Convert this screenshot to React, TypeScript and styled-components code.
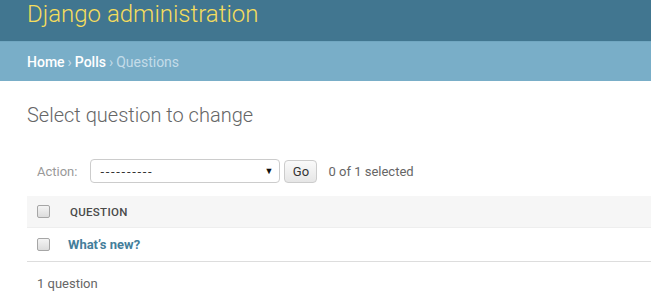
import React from 'react';
import styled, { createGlobalStyle } from 'styled-components';

const GlobalStyle = createGlobalStyle`
  html, body {
    margin: 0;
    padding: 0;
    background: #fff;
    overflow: hidden;
  }
  body {
    font-family: Roboto, "Liberation Sans", Arial, sans-serif;
    font-size: 14px;
    color: #333;
  }
`;

const Header = styled.div`
  background: #417690;
  height: 41px;
  padding: 0 27px;
  box-sizing: border-box;
`;

const Branding = styled.h1`
  margin: 0;
  font-size: 24px;
  line-height: 28px;
  font-weight: 300;
  color: #f5dd5d;
`;

const Breadcrumbs = styled.div`
  background: #79aec8;
  border-top: 1px solid #71a7c1;
  height: 40px;
  box-sizing: border-box;
  padding: 12px 27px 0;
  font-size: 14px;
  line-height: 17px;
  color: #c4dce8;
`;

const Crumb = styled.a`
  color: #fff;
  font-weight: 500;
  text-decoration: none;
`;

const Sep = styled.span`
  margin: 0 3px;
`;

const Content = styled.div`
  padding: 22px 0 0 27px;
`;

const Title = styled.h1`
  margin: 0 0 26px;
  font-size: 20px;
  line-height: 24px;
  font-weight: 300;
  color: #666;
`;

const Actions = styled.div`
  display: flex;
  align-items: center;
  padding: 0 10px;
  height: 36px;
  font-size: 13px;
  color: #999;
`;

const Label = styled.label`
  margin-right: 13px;
`;

const Select = styled.div`
  width: 190px;
  height: 24px;
  box-sizing: border-box;
  border: 1px solid #ccc;
  border-radius: 4px;
  display: flex;
  align-items: center;
  justify-content: space-between;
  padding: 0 6px 0 9px;
  color: #333;
  font-size: 13px;
`;

const Dashes = styled.span`
  letter-spacing: 1.7px;
`;

const Arrow = styled.span`
  font-size: 9px;
  color: #111;
`;

const GoButton = styled.button`
  margin-left: 4px;
  width: 33px;
  height: 23px;
  border: 1px solid #ccc;
  border-radius: 4px;
  background: linear-gradient(#fafafa, #e6e6e6);
  font-family: inherit;
  font-size: 13px;
  color: #333;
  padding: 0;
`;

const Counter = styled.span`
  margin-left: 11px;
  color: #666;
`;

const Table = styled.div`
  margin-top: 7px;
`;

const Row = styled.div<{ head?: boolean }>`
  display: flex;
  align-items: center;
  height: ${p => (p.head ? '31px' : '33px')};
  background: ${p => (p.head ? '#f6f6f6' : '#fff')};
  border-bottom: 1px solid ${p => (p.head ? '#eee' : '#ddd')};
  padding-left: 10px;
`;

const Check = styled.span`
  width: 11px;
  height: 11px;
  border: 1px solid #a6a6a6;
  border-radius: 2px;
  background: linear-gradient(#f4f4f4, #dcdcdc);
  box-sizing: content-box;
`;

const HeadCell = styled.span`
  margin-left: 20px;
  font-size: 11.5px;
  font-weight: 500;
  color: #4a4a4a;
  text-transform: uppercase;
  letter-spacing: 0.3px;
`;

const Link = styled.a`
  margin-left: 18px;
  font-size: 13px;
  font-weight: 700;
  color: #447e9b;
  text-decoration: none;
`;

const Paginator = styled.p`
  margin: 14px 0 0;
  padding-left: 10px;
  font-size: 13px;
  color: #666;
`;

export default function App() {
  return (
    <>
      <GlobalStyle />
      <Header>
        <Branding>Django administration</Branding>
      </Header>
      <Breadcrumbs>
        <Crumb href="#">Home</Crumb>
        <Sep>›</Sep>
        <Crumb href="#">Polls</Crumb>
        <Sep>›</Sep>
        Questions
      </Breadcrumbs>
      <Content>
        <Title>Select question to change</Title>
        <Actions>
          <Label>Action:</Label>
          <Select>
            <Dashes>----------</Dashes>
            <Arrow>▼</Arrow>
          </Select>
          <GoButton>Go</GoButton>
          <Counter>0 of 1 selected</Counter>
        </Actions>
        <Table>
          <Row head>
            <Check />
            <HeadCell>Question</HeadCell>
          </Row>
          <Row>
            <Check />
            <Link href="#">What’s new?</Link>
          </Row>
        </Table>
        <Paginator>1 question</Paginator>
      </Content>
    </>
  );
}
